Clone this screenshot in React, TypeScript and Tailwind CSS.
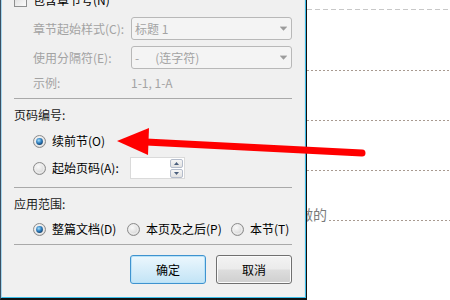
import type { ReactNode } from 'react'

const font = "font-['Microsoft_YaHei','Noto_Sans_CJK_SC',sans-serif]"

function Radio({ on }: { on?: boolean }) {
  return (
    <svg width="13" height="13" viewBox="0 0 13 13" className="shrink-0">
      <defs>
        <radialGradient id="rOff" cx="0.4" cy="0.35" r="0.7">
          <stop offset="0" stopColor="#fafafa" />
          <stop offset="1" stopColor="#cfcfcf" />
        </radialGradient>
        <radialGradient id="rOn" cx="0.4" cy="0.35" r="0.7">
          <stop offset="0" stopColor="#a8e0fa" />
          <stop offset="0.55" stopColor="#2f7fc0" />
          <stop offset="1" stopColor="#123f6a" />
        </radialGradient>
      </defs>
      <circle cx="6.5" cy="6.5" r="6" fill="url(#rOff)" stroke="#8c8c8c" strokeWidth="1" />
      <circle cx="6.5" cy="6.5" r="4.4" fill="none" stroke="#f4f4f4" strokeWidth="0.8" />
      {on && <circle cx="6.5" cy="6.5" r="3.4" fill="url(#rOn)" />}
    </svg>
  )
}

function Combo({ children }: { children: ReactNode }) {
  return (
    <div className="flex flex-1 items-center h-[23px] rounded-[3px] border border-[#b8b8b8] bg-[#f4f4f4] pl-[3px] pr-[4px] text-[#a3a3a3]">
      <span className="flex-1 leading-none">{children}</span>
      <svg width="7" height="5" viewBox="0 0 7 5">
        <path d="M0 0.5h7" stroke="#d0d0d0" strokeWidth="1" />
        <path d="M0 1h7L3.5 4.8z" fill="#9c9c9c" />
      </svg>
    </div>
  )
}

function Sep() {
  return <div className="h-px bg-[#a9a9a9] shrink-0" />
}

export default function App() {
  return (
    <div className={`relative flex w-[450px] h-[300px] overflow-hidden bg-white text-[12px] ${font}`}>
      {/* dialog */}
      <div className="relative z-10 w-[307px] h-[300px] shrink-0 border-l border-l-[#3b5062] border-r border-r-[#111] border-b-2 border-b-[#111]">
        <div className="h-full border-l border-l-[#a6d6ef] border-r border-r-[#3cbde8] border-b border-b-[#3cbde8]">
          <div className="h-full bg-[#f0f0f0] border-r border-r-[#e6e6e6] px-[12px] flex flex-col overflow-hidden">
            {/* 包含章节号 (cut by the top edge) */}
            <div className="-mt-[10px] h-[20px] shrink-0 flex items-center gap-[6px] text-black">
              <div className="w-[13px] h-[13px] border border-[#8e8f8f] bg-gradient-to-br from-[#dcdcdc] to-[#fbfbfb]" />
              <span>包含章节号(N)</span>
            </div>

            <div className="mt-[7px] pl-[19px] flex items-center text-[#a3a3a3]">
              <span className="w-[98px]">章节起始样式(C):</span>
              <Combo>标题 1</Combo>
            </div>
            <div className="mt-[6px] pl-[19px] flex items-center text-[#a3a3a3]">
              <span className="w-[98px]">使用分隔符(E):</span>
              <Combo>
                -<span className="ml-[16px]">(连字符)</span>
              </Combo>
            </div>
            <div className="mt-[5px] h-[18px] pl-[19px] flex items-center text-[#a3a3a3]">
              <span className="w-[98px]">示例:</span>
              <span>1-1, 1-A</span>
            </div>

            <div className="mt-[6px]">
              <Sep />
            </div>

            <div className="mt-[7px] h-[18px] flex items-center text-[#1a1a1a]">页码编号:</div>
            <div className="mt-[8px] h-[18px] pl-[19px] flex items-center gap-[6px] text-black">
              <Radio on />
              <span>续前节(O)</span>
            </div>
            <div className="mt-[7px] h-[22px] pl-[19px] flex items-center text-black">
              <Radio />
              <span className="ml-[6px] w-[78px]">起始页码(A):</span>
              <div className="w-[55px] h-[22px] bg-white border border-[#dadada] flex items-center justify-end pr-[1px]">
                <div className="flex flex-col gap-[1px]">
                  <div className="w-[13px] h-[9px] border border-[#b4bccb] rounded-[2px] bg-gradient-to-b from-[#f6f6f6] to-[#e2e2e2] flex items-center justify-center">
                    <svg width="5" height="3" viewBox="0 0 5 3">
                      <path d="M0 3L2.5 0L5 3z" fill="#4b5f7c" />
                    </svg>
                  </div>
                  <div className="w-[13px] h-[9px] border border-[#b4bccb] rounded-[2px] bg-gradient-to-b from-[#f6f6f6] to-[#e2e2e2] flex items-center justify-center">
                    <svg width="5" height="3" viewBox="0 0 5 3">
                      <path d="M0 0L5 0L2.5 3z" fill="#4b5f7c" />
                    </svg>
                  </div>
                </div>
              </div>
            </div>

            <div className="mt-[8px]">
              <Sep />
            </div>

            <div className="mt-[7px] h-[18px] flex items-center text-[#1a1a1a]">应用范围:</div>
            <div className="mt-[7px] h-[18px] pl-[19px] flex items-center text-black">
              <Radio on />
              <span className="ml-[6px] w-[75px]">整篇文档(D)</span>
              <Radio />
              <span className="ml-[6px] w-[85px]">本页及之后(P)</span>
              <Radio />
              <span className="ml-[6px]">本节(T)</span>
            </div>

            <div className="mt-[6px]">
              <Sep />
            </div>

            <div className="mt-[10px] flex justify-end gap-[10px] text-black">
              <button className="w-[76px] h-[29px] rounded-[3px] border border-[#3f93cf] bg-gradient-to-b from-[#ecf7fd] to-[#c2e4f6] shadow-[inset_0_0_0_1px_#b8e2f8]">
                确定
              </button>
              <button className="w-[76px] h-[29px] rounded-[3px] border border-[#707070] bg-[linear-gradient(#f3f3f3_0%,#ebebeb_48%,#dddddd_52%,#cfcfcf_100%)] shadow-[inset_0_0_0_1px_#fbfbfb]">
                取消
              </button>
            </div>
          </div>
        </div>
      </div>

      {/* document page behind the dialog */}
      <div className="flex-1 flex flex-col pt-[9px]">
        <div className="h-px bg-[repeating-linear-gradient(90deg,#c8c8c8_0_5px,transparent_5px_8px)]" />
        <div className="mt-[60px] h-px bg-[repeating-linear-gradient(90deg,#a89a90_0_2px,transparent_2px_4px)]" />
        <div className="mt-[49px] h-px bg-[repeating-linear-gradient(90deg,#a89a90_0_2px,transparent_2px_4px)]" />
        <div className="mt-[49px] h-px bg-[repeating-linear-gradient(90deg,#a89a90_0_2px,transparent_2px_4px)]" />
        <div className="mt-[35px] h-[16px] flex">
          <span className="-ml-[8px] text-[14px] leading-[16px] text-[#7a7a7a]">做的</span>
          <div className="flex-1 self-end mb-[1px] ml-[2px] h-px bg-[repeating-linear-gradient(90deg,#a89a90_0_2px,transparent_2px_4px)]" />
        </div>
      </div>

      {/* red annotation arrow */}
      <svg className="absolute left-0 top-0 z-20 pointer-events-none" width="450" height="300" viewBox="0 0 450 300">
        <line x1="146" y1="142" x2="362" y2="153" stroke="#ff0000" strokeWidth="7" strokeLinecap="round" />
        <polygon points="117,141 149,128 148,155" fill="#ff0000" />
      </svg>
    </div>
  )
}
